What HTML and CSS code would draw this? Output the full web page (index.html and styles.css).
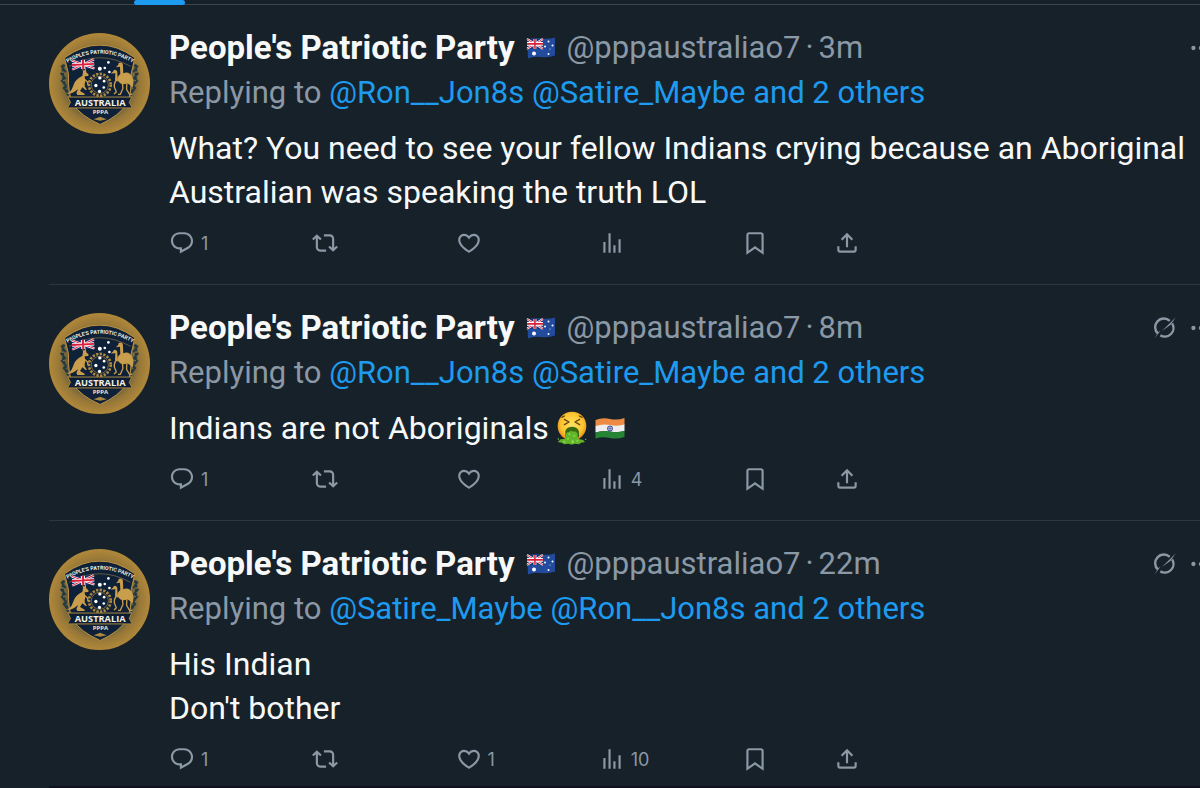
FILE: index.html
```
<!DOCTYPE html>
<html lang="en">
<head>
  <meta charset="UTF-8">
  <meta name="viewport" content="width=device-width, initial-scale=1">
  <title>People's Patriotic Party - Replies</title>
  <link rel="stylesheet" href="styles.css">
</head>
<body>

  <!-- Shared icons -->
  <svg class="sprite" aria-hidden="true">
    <defs>
      <radialGradient id="gold" cx="50%" cy="50%" r="50%">
        <stop offset="0.6" stop-color="#5d5a40"/>
        <stop offset="0.8" stop-color="#987838"/>
        <stop offset="1" stop-color="#b0883a"/>
      </radialGradient>
      <radialGradient id="face" cx="50%" cy="45%" r="55%">
        <stop offset="0" stop-color="#ffe262"/>
        <stop offset="0.7" stop-color="#fcc52f"/>
        <stop offset="1" stop-color="#e58c1b"/>
      </radialGradient>
      <path id="motto" d="M80 129Q180 70 283 129"/>
      <g id="union">
        <path fill="#16306f" d="M0 0h60v30H0z"/>
        <path stroke="#fff" stroke-width="7" d="M0 0l60 30M60 0L0 30"/>
        <path stroke="#d8203a" stroke-width="3" d="M0 0l60 30M60 0L0 30"/>
        <path stroke="#fff" stroke-width="11" d="M30 0v30M0 15h60"/>
        <path stroke="#d8203a" stroke-width="6" d="M30 0v30M0 15h60"/>
      </g>
    </defs>

    <symbol id="flag-au" viewBox="0 0 60 42">
      <path fill="#234b9d" d="M2 4Q16 0 30 2Q45 4 58 0V36Q44 41 30 39Q15 37 4 42Z"/>
      <use href="#union" transform="translate(2 3) scale(.53 .65)"/>
      <g fill="#fff">
        <circle cx="16" cy="32" r="4"/><circle cx="45" cy="8" r="2"/><circle cx="38" cy="18" r="2"/>
        <circle cx="53" cy="16" r="2"/><circle cx="48" cy="23" r="1"/><circle cx="45" cy="33" r="2"/>
      </g>
    </symbol>

    <symbol id="flag-in" viewBox="0 0 60 44">
      <path fill="#ed8b45" d="M1 6Q15 0 30 4Q45 7 59 2V16Q45 20 30 17Q15 15 1 19Z"/>
      <path fill="#eeeeef" d="M1 18Q15 13 30 16Q45 19 59 15V28Q45 32 30 29Q15 27 1 31Z"/>
      <path fill="#258535" d="M1 31Q15 26 30 29Q45 32 59 28V40Q45 45 30 42Q15 39 1 43Z"/>
      <g fill="none" stroke="#3b4a9b">
        <circle cx="30" cy="23" r="5" stroke-width="2"/>
        <path d="M30 18v10M25 23h10M26 19l8 8M34 19l-8 8"/>
      </g>
    </symbol>

    <symbol id="vomit" viewBox="0 0 90 100">
      <circle cx="45" cy="44" r="43" fill="url(#face)"/>
      <path fill="none" stroke="#68400e" stroke-width="4" stroke-linecap="round" stroke-linejoin="round" d="M22 14l-7 4M67 14l8 4M22 24l14 8-14 8M68 24l-14 8 14 8"/>
      <path fill="#386a13" d="M25 66Q24 46 45 46T66 66V78H25Z"/>
      <path fill="#62b52a" d="M27 68q4-8 9-5 5-8 12-2 8-5 14 6v15l16 4 6 6-12 2-6 5-13-2-8 3-11-3-12 2-8-5-12-2 9-8 13-2z"/>
      <g fill="#8cdb48">
        <circle cx="37" cy="69" r="3"/><circle cx="52" cy="73" r="3"/><circle cx="33" cy="82" r="3"/>
        <circle cx="61" cy="88" r="3"/><circle cx="22" cy="91" r="3"/><circle cx="47" cy="91" r="4"/>
        <circle cx="4" cy="83" r="2"/><circle cx="86" cy="84" r="2"/>
      </g>
    </symbol>

    <symbol id="reply" viewBox="0 0 24 24"><path d="M1.751 10c0-4.42 3.584-8 8.005-8h4.366c4.49 0 8.129 3.64 8.129 8.13 0 2.96-1.607 5.68-4.196 7.11l-8.054 4.46v-3.69h-.067c-4.49.1-8.183-3.51-8.183-8.01zm8.005-6c-3.317 0-6.005 2.69-6.005 6 0 3.37 2.77 6.08 6.138 6.01l.351-.01h1.761v2.3l5.087-2.81c1.951-1.08 3.163-3.13 3.163-5.36 0-3.39-2.744-6.13-6.129-6.13H9.756z"/></symbol>
    <symbol id="repost" viewBox="0 0 24 24"><path d="M4.5 3.88l4.432 4.14-1.364 1.46L5.5 7.55V16c0 1.1.896 2 2 2H13v2H7.5c-2.209 0-4-1.79-4-4V7.55L1.432 9.48.068 8.02 4.5 3.88zM16.5 6H11V4h5.5c2.209 0 4 1.79 4 4v8.45l2.068-1.93 1.364 1.46-4.432 4.14-4.432-4.14 1.364-1.46 2.068 1.93V8c0-1.1-.896-2-2-2z"/></symbol>
    <symbol id="like" viewBox="0 0 24 24"><path d="M16.697 5.5c-1.222-.06-2.679.51-3.89 2.16l-.805 1.09-.806-1.09C9.984 6.01 8.526 5.44 7.304 5.5c-1.243.07-2.349.78-2.91 1.91-.552 1.12-.633 2.78.479 4.82 1.074 1.97 3.257 4.27 7.129 6.61 3.87-2.34 6.052-4.64 7.126-6.61 1.111-2.04 1.03-3.7.477-4.82-.561-1.13-1.666-1.84-2.908-1.91zm4.187 7.69c-1.351 2.48-4.001 5.12-8.379 7.67l-.503.3-.504-.3c-4.379-2.55-7.029-5.19-8.382-7.67-1.36-2.5-1.41-4.86-.514-6.67.887-1.79 2.647-2.91 4.601-3.01 1.651-.09 3.368.56 4.798 2.01 1.429-1.45 3.146-2.1 4.796-2.01 1.954.1 3.714 1.22 4.601 3.01.896 1.81.846 4.17-.514 6.67z"/></symbol>
    <symbol id="views" viewBox="0 0 24 24"><path d="M8.75 21V3h2v18h-2zM18 21V8.5h2V21h-2zM4 21l.004-10h2L6 21H4zm9.248 0v-7h2v7h-2z"/></symbol>
    <symbol id="bookmark" viewBox="0 0 24 24"><path d="M4 4.5C4 3.12 5.119 2 6.5 2h11C18.881 2 20 3.12 20 4.5v18.44l-8-5.71-8 5.71V4.5zM6.5 4c-.276 0-.5.22-.5.5v14.56l6-4.29 6 4.29V4.5c0-.28-.224-.5-.5-.5h-11z"/></symbol>
    <symbol id="share" viewBox="0 0 24 24"><path d="M12 2.59l5.7 5.7-1.41 1.42L13 6.41V16h-2V6.41l-3.3 3.3-1.41-1.42L12 2.59zM21 15l-.02 3.51c0 1.38-1.12 2.49-2.5 2.49H5.5C4.11 21 3 19.88 3 18.5V15h2v3.5c0 .28.22.5.5.5h12.98c.28 0 .5-.22.5-.5L19 15h2z"/></symbol>
    <symbol id="grok" viewBox="0 0 24 24">
      <path fill="none" stroke="currentColor" stroke-width="2.2" d="M5.5 17.2A8 8 0 0 1 16.4 5.4M18.6 7.7A8 8 0 0 1 7.7 18.8"/>
      <path d="M22 2L9.2 14.8l8-5.9zM2 22l5.8-7.4-1.9 1.1z"/>
    </symbol>
    <symbol id="more" viewBox="0 0 24 24"><circle cx="5" cy="12" r="2"/><circle cx="12" cy="12" r="2"/><circle cx="19" cy="12" r="2"/></symbol>
  </svg>

  <div class="tabs"><div class="tab-indicator"></div></div>

  <main class="feed">

    <article class="tweet">
      <svg class="avatar" viewBox="27 37 306 306" role="img" aria-label="People's Patriotic Party">
        <g id="crest">
          <circle cx="180" cy="190" r="153" fill="url(#gold)"/>
          <!-- laurels -->
          <g fill="none" stroke="#263a42" stroke-width="8">
            <path d="M72 132q-10 40 14 94M288 132q10 40-14 94" stroke-dasharray="9 4"/>
            <path d="M64 136l14 20M62 158l16 18M64 180l16 18M70 202l14 16M296 136l-14 20M298 158l-16 18M296 180l-16 18M290 202l-14 16" stroke-width="6"/>
          </g>
          <!-- shield -->
          <path fill="#0e2139" stroke="#bb9242" stroke-width="3" d="M74 112Q130 72 180 74Q232 72 287 112L276 160Q278 225 262 252Q240 288 182 314Q122 288 100 252Q84 225 86 160Z"/>
          <path fill="none" stroke="#8d7440" stroke-width="2" d="M88 138Q180 86 274 138"/>
          <text class="motto" fill="#f4efdd"><textPath href="#motto" startOffset="50%" text-anchor="middle">PEOPLE'S PATRIOTIC PARTY</textPath></text>
          <use href="#union" transform="translate(96 120) rotate(-3) scale(1.12 .93)"/>
          <g fill="#fff">
            <circle cx="181" cy="145" r="6"/><circle cx="207" cy="126" r="4"/><circle cx="196" cy="143" r="4"/><circle cx="210" cy="155" r="4"/>
            <circle cx="181" cy="173" r="5"/><circle cx="169" cy="196" r="5"/><circle cx="194" cy="183" r="4"/><circle cx="193" cy="202" r="4"/><circle cx="180" cy="214" r="5"/>
          </g>
          <!-- wreath -->
          <g fill="none" stroke="#ae8a42">
            <circle cx="181" cy="194" r="33" stroke-width="8" stroke-dasharray="7 4"/>
            <circle cx="181" cy="194" r="26" stroke-width="2"/>
          </g>
          <g fill="#c89d4b">
            <!-- kangaroo -->
            <path d="M128 143l5 9 5-9 2 13 7 7-1 4-11 1c2 11 2 21-1 29l8 12-4 1-10-9-7 12 14 8v4h-22l-3-6 5-12c-11 10-21 15-35 15 15-7 17-17 22-29 6-15 17-22 26-26l2-12z"/>
            <path fill="none" stroke="#c89d4b" stroke-width="4" d="M131 174l13 12 1 9M124 182l10 16"/>
            <!-- emu -->
            <path d="M237 133q-1-7 7-7 7 0 7 9l1 24q18-8 28 12 5 13 0 32-7-11-16-14-17 8-27-5-7-13 6-23l-1-22-12 2z"/>
            <path d="M221 154q2-7 8-5 6 2 5 12l2 22q-7 2-9-4l1-20-14 1z"/>
            <path fill="none" stroke="#c89d4b" stroke-width="4" d="M249 185l2 20-8 18h-7M263 186l-1 22 9 15h8M231 179q-8 12-6 22l6 14-7 7"/>
          </g>
          <!-- banner -->
          <path fill="#0d1e34" stroke="#a9873f" stroke-width="3" d="M84 231H278L270 247 279 264H83L92 247Z"/>
          <text class="crest-name" x="182" y="257" text-anchor="middle" fill="#f2efe5">AUSTRALIA</text>
          <text class="crest-sub" x="183" y="282" text-anchor="middle" fill="#eee6cf">PPPA</text>
          <path fill="#a9873f" d="M162 298l20-7 20 7-20 5z"/>
        </g>
      </svg>
      <div class="content">
        <header class="tweet-header">
          <a class="name" href="#">People's Patriotic Party</a>
          <svg class="flag" role="img" aria-label="Australia"><use href="#flag-au"/></svg>
          <span class="meta"><a href="#">@pppaustraliao7</a><span class="dot">·</span><time>3m</time></span>
          <div class="tools">
            <button class="icon-btn" aria-label="More"><svg><use href="#more"/></svg></button>
          </div>
        </header>
        <div class="replying">Replying to <a href="#">@Ron__Jon8s</a> <a href="#">@Satire_Maybe</a> <a href="#">and 2 others</a></div>
        <p class="text">What? You need to see your fellow Indians crying because an Aboriginal Australian was speaking the truth LOL</p>
        <div class="actions">
          <button class="icon-btn" aria-label="Reply"><svg><use href="#reply"/></svg><span>1</span></button>
          <button class="icon-btn" aria-label="Repost"><svg><use href="#repost"/></svg></button>
          <button class="icon-btn" aria-label="Like"><svg><use href="#like"/></svg></button>
          <button class="icon-btn" aria-label="Views"><svg><use href="#views"/></svg></button>
          <button class="icon-btn" aria-label="Bookmark"><svg><use href="#bookmark"/></svg></button>
          <button class="icon-btn" aria-label="Share"><svg><use href="#share"/></svg></button>
        </div>
      </div>
    </article>

    <article class="tweet">
      <svg class="avatar" viewBox="27 37 306 306" role="img" aria-label="People's Patriotic Party"><use href="#crest"/></svg>
      <div class="content">
        <header class="tweet-header">
          <a class="name" href="#">People's Patriotic Party</a>
          <svg class="flag" role="img" aria-label="Australia"><use href="#flag-au"/></svg>
          <span class="meta"><a href="#">@pppaustraliao7</a><span class="dot">·</span><time>8m</time></span>
          <div class="tools">
            <button class="icon-btn" aria-label="Explain"><svg><use href="#grok"/></svg></button>
            <button class="icon-btn" aria-label="More"><svg><use href="#more"/></svg></button>
          </div>
        </header>
        <div class="replying">Replying to <a href="#">@Ron__Jon8s</a> <a href="#">@Satire_Maybe</a> <a href="#">and 2 others</a></div>
        <p class="text">Indians are not Aboriginals <svg class="emoji" role="img" aria-label="Vomiting face"><use href="#vomit"/></svg><svg class="emoji" role="img" aria-label="India"><use href="#flag-in"/></svg></p>
        <div class="actions">
          <button class="icon-btn" aria-label="Reply"><svg><use href="#reply"/></svg><span>1</span></button>
          <button class="icon-btn" aria-label="Repost"><svg><use href="#repost"/></svg></button>
          <button class="icon-btn" aria-label="Like"><svg><use href="#like"/></svg></button>
          <button class="icon-btn" aria-label="Views"><svg><use href="#views"/></svg><span>4</span></button>
          <button class="icon-btn" aria-label="Bookmark"><svg><use href="#bookmark"/></svg></button>
          <button class="icon-btn" aria-label="Share"><svg><use href="#share"/></svg></button>
        </div>
      </div>
    </article>

    <article class="tweet">
      <svg class="avatar" viewBox="27 37 306 306" role="img" aria-label="People's Patriotic Party"><use href="#crest"/></svg>
      <div class="content">
        <header class="tweet-header">
          <a class="name" href="#">People's Patriotic Party</a>
          <svg class="flag" role="img" aria-label="Australia"><use href="#flag-au"/></svg>
          <span class="meta"><a href="#">@pppaustraliao7</a><span class="dot">·</span><time>22m</time></span>
          <div class="tools">
            <button class="icon-btn" aria-label="Explain"><svg><use href="#grok"/></svg></button>
            <button class="icon-btn" aria-label="More"><svg><use href="#more"/></svg></button>
          </div>
        </header>
        <div class="replying">Replying to <a href="#">@Satire_Maybe</a> <a href="#">@Ron__Jon8s</a> <a href="#">and 2 others</a></div>
        <p class="text">His Indian<br>Don't bother</p>
        <div class="actions">
          <button class="icon-btn" aria-label="Reply"><svg><use href="#reply"/></svg><span>1</span></button>
          <button class="icon-btn" aria-label="Repost"><svg><use href="#repost"/></svg></button>
          <button class="icon-btn" aria-label="Like"><svg><use href="#like"/></svg><span>1</span></button>
          <button class="icon-btn" aria-label="Views"><svg><use href="#views"/></svg><span>10</span></button>
          <button class="icon-btn" aria-label="Bookmark"><svg><use href="#bookmark"/></svg></button>
          <button class="icon-btn" aria-label="Share"><svg><use href="#share"/></svg></button>
        </div>
      </div>
    </article>

  </main>
</body>
</html>
```
FILE: styles.css
```
* {
  box-sizing: border-box;
}

body {
  margin: 0;
  background: #17212a;
  color: #f7f9f9;
  font-family: Roboto, "Liberation Sans", sans-serif;
  font-size: 32px;
  line-height: 45px;
  overflow-x: hidden;
}

a {
  color: inherit;
  text-decoration: none;
}

/* Zero size instead of display: none, so the gradients keep working */
.sprite {
  position: absolute;
  width: 0;
  height: 0;
}

/* Tab bar, only its lower edge is in view */
.tabs {
  height: 5px;
  padding-left: 134px;
  border-bottom: 1px solid #3b4650;
}

.tab-indicator {
  width: 51px;
  height: 5px;
  border-radius: 3px;
  background: #1d9bf0;
}

/* Feed runs a little past the right edge of the window */
.feed {
  margin: 0 -14px 0 49px;
}

.tweet {
  display: flex;
  gap: 19px;
  padding: 20px 0 27px;
  border-bottom: 1px solid #2c3640;
}

.tweet:last-child {
  padding-bottom: 13px;
  border-bottom: 2px solid #10131f;
}

.avatar {
  flex: none;
  width: 101px;
  height: 101px;
  margin-top: 8px;
}

.motto {
  font: 700 16px Roboto, sans-serif;
}

.crest-name {
  font: 700 28px "Open Sans", sans-serif;
}

.crest-sub {
  font: 700 18px "Open Sans", sans-serif;
}

.content {
  flex: 1;
  min-width: 0;
}

/* Name, handle and time */
.tweet-header {
  display: flex;
  align-items: center;
  white-space: nowrap;
}

.name {
  font-size: 33px;
  font-weight: 700;
}

.flag {
  width: 30px;
  height: 22px;
  margin: 0 11px;
}

.meta,
.replying {
  color: #8b98a5;
  font-size: 31px;
}

.dot {
  margin: 0 5px;
}

.tools {
  display: flex;
  gap: 10px;
  margin-left: auto;
}

.replying a {
  color: #1d9bf0;
}

.text {
  margin: 11px 0 15px;
  padding-right: 20px;
  line-height: 44px;
}

.emoji {
  width: 30px;
  height: 34px;
  margin-right: 8px;
  vertical-align: -6px;
}

/* Action row */
.actions {
  display: grid;
  grid-template-columns: repeat(4, 1fr) 92px 28px;
  max-width: 693px;
}

.icon-btn {
  display: flex;
  align-items: center;
  gap: 6px;
  height: 28px;
  padding: 0;
  border: 0;
  background: none;
  color: #8b98a5;
  font: 18px Inter, "Liberation Sans", sans-serif;
  cursor: pointer;
}

.icon-btn svg {
  width: 26px;
  height: 26px;
  fill: currentColor;
}

.icon-btn:hover {
  color: #1d9bf0;
}
```
